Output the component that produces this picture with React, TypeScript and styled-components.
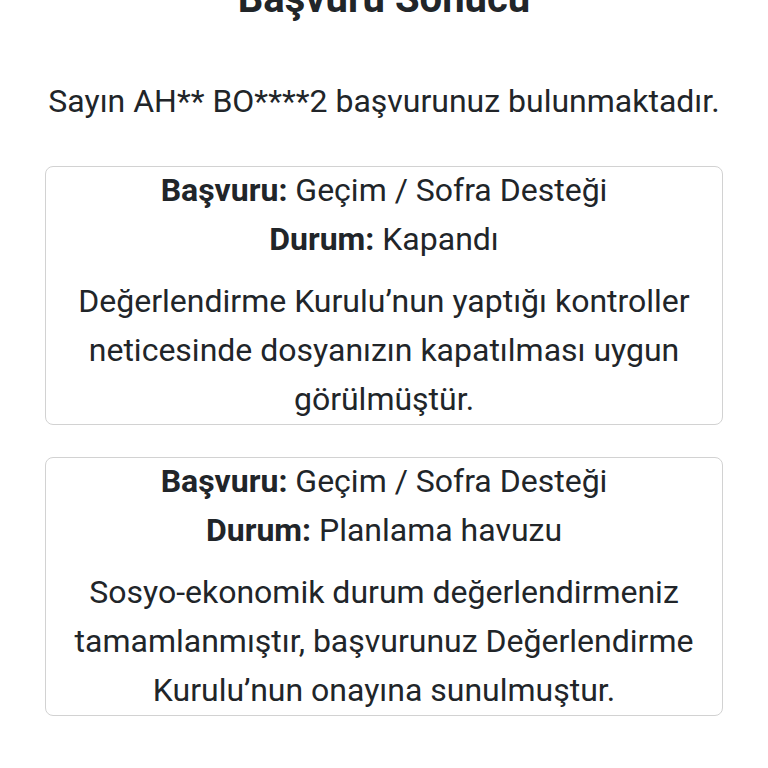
import { createGlobalStyle, styled } from 'styled-components';

const GlobalStyle = createGlobalStyle`
  html, body {
    margin: 0;
    padding: 0;
    background: #ffffff;
  }
  body {
    font-family: Roboto, "Noto Sans", "Liberation Sans", sans-serif;
    color: #212529;
  }
`;

interface Application {
  type: string;
  status: string;
  description: string;
}

const applications: Application[] = [
  {
    type: 'Geçim / Sofra Desteği',
    status: 'Kapandı',
    description:
      'Değerlendirme Kurulu’nun yaptığı kontroller neticesinde dosyanızın kapatılması uygun görülmüştür.',
  },
  {
    type: 'Geçim / Sofra Desteği',
    status: 'Planlama havuzu',
    description:
      'Sosyo-ekonomik durum değerlendirmeniz tamamlanmıştır, başvurunuz Değerlendirme Kurulu’nun onayına sunulmuştur.',
  },
];

const ResultCard = ({ type, status, description }: Application) => (
  <Card>
    <InfoLine>
      <Label>Başvuru:</Label> {type}
    </InfoLine>
    <InfoLine>
      <Label>Durum:</Label> {status}
    </InfoLine>
    <Description>{description}</Description>
  </Card>
);

export default function App() {
  return (
    <>
      <GlobalStyle />
      <Page>
        <Title>Başvuru Sonucu</Title>
        <Greeting>Sayın AH** BO****2 başvurunuz bulunmaktadır.</Greeting>
        <CardList>
          {applications.map((app, i) => (
            <ResultCard key={i} {...app} />
          ))}
        </CardList>
      </Page>
    </>
  );
}

const Page = styled.main`
  display: flex;
  flex-direction: column;
  align-items: center;
  width: 100%;
  box-sizing: border-box;
  padding: 0 45px 40px 45px;
`;

const Title = styled.h2`
  margin: -25px 0 0 0;
  font-size: 40px;
  line-height: 48px;
  font-weight: 700;
  text-align: center;
`;

const Greeting = styled.p`
  margin: 58px 0 0 0;
  font-size: 32px;
  line-height: 40px;
  font-weight: 400;
  text-align: center;
  white-space: nowrap;
`;

const CardList = styled.section`
  display: flex;
  flex-direction: column;
  gap: 32px;
  width: 100%;
  margin-top: 45px;
`;

const Card = styled.article`
  display: flex;
  flex-direction: column;
  align-items: center;
  width: 100%;
  box-sizing: border-box;
  padding: 0 12px;
  border: 1px solid #d2d2d2;
  border-radius: 8px;
  text-align: center;
`;

const InfoLine = styled.div`
  font-size: 32px;
  line-height: 49px;
  margin-top: -1px;
  margin-bottom: 1px;
`;

const Label = styled.strong`
  font-weight: 700;
`;

const Description = styled.p`
  margin: 12px 0 0 0;
  font-size: 32px;
  line-height: 49px;
`;
